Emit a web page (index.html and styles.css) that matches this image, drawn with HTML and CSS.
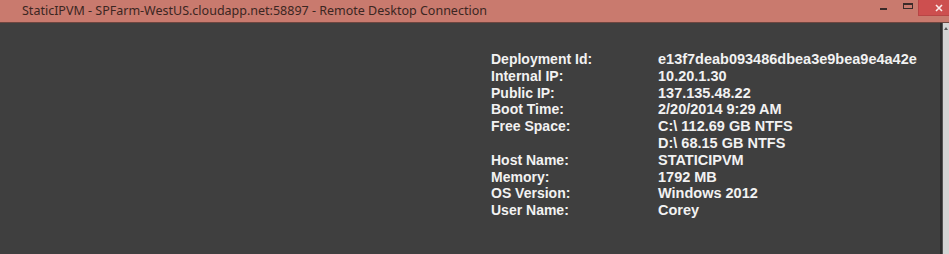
FILE: index.html
```html
<html>

<head>
	<link rel="stylesheet" href="styles.css">
</head>

<body>
	<div class="window">
		<div class="title-bar">
			<div class="title">StaticIPVM - SPFarm-WestUS.cloudapp.net:58897 - Remote Desktop Connection</div>
			<div class="btn-min"></div>
			<div class="btn-max"></div>
			<div class="btn-close">
				<svg width="8" height="8" viewBox="0 0 8 8"><path d="M1 1L7 7M7 1L1 7" stroke="#fbeaea" stroke-width="1.6"/></svg>
			</div>
		</div>

		<div class="desktop">
			<div class="info">
				<div class="label">Deployment Id:</div>
				<div class="value">e13f7deab093486dbea3e9bea9e4a42e</div>
				<div class="label">Internal IP:</div>
				<div class="value">10.20.1.30</div>
				<div class="label">Public IP:</div>
				<div class="value">137.135.48.22</div>
				<div class="label">Boot Time:</div>
				<div class="value">2/20/2014 9:29 AM</div>
				<div class="label">Free Space:</div>
				<div class="value">C:\ 112.69 GB NTFS<br>D:\ 68.15 GB NTFS</div>
				<div class="label">Host Name:</div>
				<div class="value">STATICIPVM</div>
				<div class="label">Memory:</div>
				<div class="value">1792 MB</div>
				<div class="label">OS Version:</div>
				<div class="value">Windows 2012</div>
				<div class="label">User Name:</div>
				<div class="value">Corey</div>
			</div>
			<div class="scroll-strip">
				<div class="arrow"></div>
			</div>
		</div>
	</div>
</body>

</html>
```

FILE: styles.css
```css
:root {
	--title: #c97a6e;
	--close: #cd4f4f;
	--desk: #3f3f3f;
	--strip: #d4d4d4;
}

html,
body {
	margin: 0;
	height: 100%;
	background: var(--desk);
	overflow: hidden;
}

.window {
	height: 100%;
	display: flex;
	flex-direction: column;
}

.title-bar {
	height: 22px;
	flex: none;
	background: var(--title);
	border-bottom: 1px solid #6e4640;
	display: flex;
	align-items: flex-start;
}

.title {
	flex: 1;
	font-family: "Noto Sans", sans-serif;
	font-size: 12.5px;
	line-height: 22px;
	color: #3b2622;
	padding-left: 22px;
	white-space: nowrap;
}

.btn-min {
	flex: none;
	width: 7px;
	height: 2px;
	background: #3a2a28;
	margin: 8px 16px 0 0;
}

.btn-max {
	flex: none;
	width: 8px;
	height: 3px;
	border: 1px solid #3a2a28;
	border-top-width: 2px;
	margin: 3px 6px 0 0;
}

.btn-close {
	flex: none;
	width: 30px;
	height: 15px;
	background: var(--close);
	outline: 1px solid #b84545;
	display: flex;
	align-items: center;
	justify-content: flex-end;
	padding-right: 6px;
	box-sizing: border-box;
}

.desktop {
	flex: 1;
	display: flex;
}

.info {
	flex: 1;
	display: grid;
	grid-template-columns: 167px auto;
	align-content: start;
	padding: 28px 0 0 491px;
	font-family: "Liberation Sans", Arial, sans-serif;
	font-weight: bold;
	line-height: 16.8px;
	color: #f2f2f2;
	border-right: 2px solid #2c2c2c;
}

.label {
	font-size: 14px;
}

.value {
	font-size: 14.5px;
}

.scroll-strip {
	width: 6px;
	background: var(--strip);
	border-left: 1px solid #555;
}

.arrow {
	width: 0;
	height: 0;
	margin: 4px auto 0;
	border-left: 2px solid transparent;
	border-right: 2px solid transparent;
	border-bottom: 3px solid #555;
}
```
